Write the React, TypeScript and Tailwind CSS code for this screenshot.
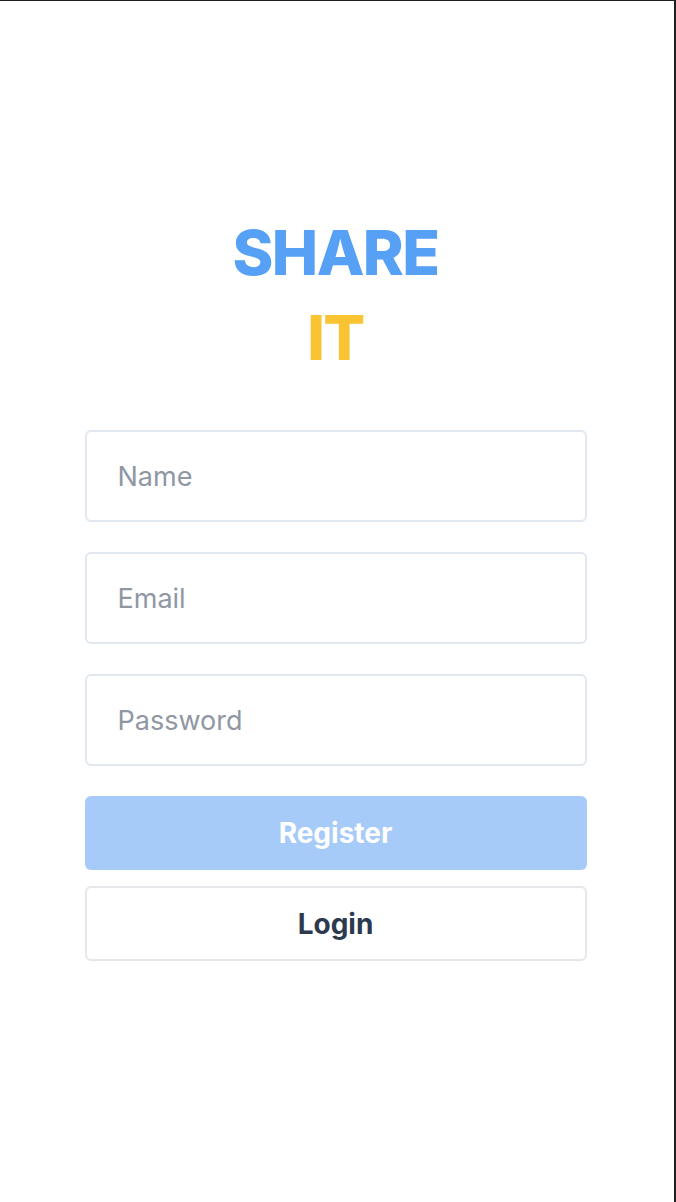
export default function App() {
  const fields = ["Name", "Email", "Password"];

  return (
    <div className="min-h-[1202px] w-full bg-white border-t border-r-2 border-[#1f1f1f] font-[Inter,sans-serif]">
      <div className="flex flex-col items-center pt-[209px] pr-[3px]">
        <h1 className="flex flex-col items-center text-[62px] leading-[85px] font-extrabold tracking-tight">
          <span className="text-[#56a0f5]">SHARE</span>
          <span className="text-[#f9c332]">IT</span>
        </h1>

        <form className="mt-[50px] w-[502px] flex flex-col" onSubmit={(e) => e.preventDefault()}>
          {fields.map((f) => (
            <input
              key={f}
              type={f === "Password" ? "password" : "text"}
              placeholder={f}
              className="h-[92px] mb-[30px] w-full rounded-md border-2 border-[#e2e8f0] bg-white px-[31px] text-[27px] text-[#1a202c] placeholder:text-[#8f97a3] outline-none"
            />
          ))}
          <button
            type="submit"
            className="h-[74px] w-full rounded-md bg-[#a7cbf9] text-white text-[28px] font-bold"
          >
            Register
          </button>
          <button
            type="button"
            className="mt-4 h-[75px] w-full rounded-md border-2 border-[#e5e7eb] bg-white text-[#2d3a4e] text-[28px] font-bold"
          >
            Login
          </button>
        </form>
      </div>
    </div>
  );
}
